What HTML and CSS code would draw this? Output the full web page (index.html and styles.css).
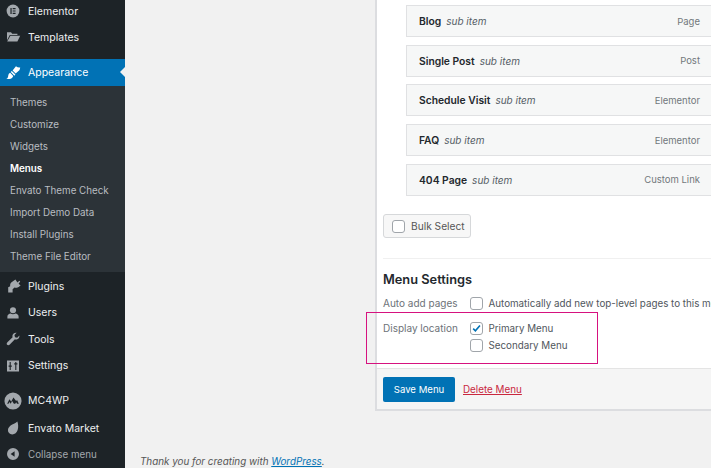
FILE: index.html
```html
<!DOCTYPE html>
<html lang="en">
<head>
<meta charset="utf-8">
<title>Menus</title>
<link rel="stylesheet" href="styles.css">
</head>
<body>
<div class="app">
  <nav class="side">
    <a class="row first"><svg class="ico" viewBox="0 0 20 20"><circle cx="10" cy="10" r="8"/><path class="cut" d="M6.800 6.200h1.500v7.600H6.800zM9.600 6.200h3.600v1.500H9.600zM9.600 9.250h3.600v1.500H9.600zM9.600 12.300h3.600v1.500H9.600z"/></svg>Elementor</a>
    <a class="row"><svg class="ico" viewBox="0 0 20 20"><path d="M2.500 4h5l1.500 1.800h6.500v1.700H6L2.500 14z"/><path d="M6.700 8.500H19l-3.500 7H2.700z"/></svg>Templates</a>
    <a class="row current"><svg class="ico" viewBox="0 0 20 20"><path d="M19 3c-2 .4-3.700-.3-5.300-1.500L9.500 6.800l3.800 3.800 4.700-4c.5-1.200.8-2.400 1-3.600z"/><path d="M8.500 7.500 13 12l-1.300 1.300-4.500-4.500zM6.500 9.800l3.800 3.800c-.5 1.800-2 3.300-5 3.900-1.200.2-2.800.2-3.800 0 2.200-1 2.300-2.700 2.500-4.200.3-1.600 1.200-3 2.500-3.500z"/></svg>Appearance</a>
    <div class="sub">
      <a>Themes</a>
      <a>Customize</a>
      <a>Widgets</a>
      <a class="on">Menus</a>
      <a>Envato Theme Check</a>
      <a>Import Demo Data</a>
      <a>Install Plugins</a>
      <a>Theme File Editor</a>
    </div>
    <a class="row r-plugins"><svg class="ico" viewBox="0 0 20 20"><path d="M13 2 15.500 5.500 18 3.500l1 1-2 2.700 2.500 2.300-1.300.8c-1.700 1.700-4 2.400-6.300 1.500L9.500 14v4H4v-6.500l2.500-1.200c-.4-2 .2-3.900 1.700-5.100L13 2z"/></svg>Plugins</a>
    <a class="row"><svg class="ico" viewBox="0 0 20 20"><circle cx="10" cy="6.500" r="3.800"/><path d="M3 17v-2.500c0-2.200 2-3.500 4-3.800 1.800 1 4.200 1 6 0 2 .3 4 1.600 4 3.800V17z"/></svg>Users</a>
    <a class="row"><svg class="ico" viewBox="0 0 20 20"><path d="M18 5.500c.3 2-.8 4-2.600 4.800-1 .4-2.100.4-3 .1L6 17c-1 1-2.500 1-3.300.2-.9-.9-.7-2.200.3-3.200l6.500-6.200c-.4-1-.4-2.200.1-3.200C10.500 2.800 12.500 1.800 14.500 2.200L11.800 5l.7 2.700 2.700.7z"/></svg>Tools</a>
    <a class="row"><svg class="ico" viewBox="0 0 20 20"><path fill-rule="evenodd" d="M2.500 3h15v14h-15zM5.800 5v4.500H4.500V11h1.300v4h1.400v-4h1.300V9.500H7.200V5zM12.800 5v1.500h-1.300V8h1.300v7h1.400V8h1.300V6.500h-1.300V5z"/></svg>Settings</a>
    <a class="row r-gap"><svg class="ico big" viewBox="0 0 20 20"><circle cx="10" cy="10" r="9.500"/><path class="cut" d="m3.500 13 2.500-5 2 2.500L10.500 6l3 4 1-1 2 4h-2l-1-1.500-1 1.500h-1.500l-2-3-1.500 3-1.500-2-1 2z"/></svg>MC4WP</a>
    <a class="row r-market"><svg class="ico" viewBox="0 0 20 20"><path d="M15.500 2c1 3.500 1.500 7 .3 10.500C14.800 15.800 12.300 18 9 18c-3.300 0-5.500-2.500-5.300-5.500.2-2.500 1.600-4 3.300-5.500C9.500 5 13 4.500 15.500 2z"/></svg>Envato Market</a>
    <a class="row collapse"><svg class="ico" viewBox="0 0 20 20"><path fill-rule="evenodd" d="M10 2.500a7.500 7.500 0 1 1 0 15 7.500 7.500 0 0 1 0-15zM12 6.500 7 10l5 3.500z"/></svg>Collapse menu</a>
  </nav>
  <main class="main">
    <div class="columns">
      <section class="panel">
        <div class="body">
          <ul class="items">
            <li><span><b>Blog</b><i>sub item</i></span><small>Page</small></li>
            <li><span><b>Single Post</b><i>sub item</i></span><small>Post</small></li>
            <li><span><b>Schedule Visit</b><i>sub item</i></span><small>Elementor</small></li>
            <li><span><b>FAQ</b><i>sub item</i></span><small>Elementor</small></li>
            <li><span><b>404 Page</b><i>sub item</i></span><small>Custom Link</small></li>
          </ul>
          <label class="bulk"><span class="check"></span>Bulk Select</label>
          <hr class="rule">
          <h3>Menu Settings</h3>
          <div class="setting auto">
            <span class="name">Auto add pages</span>
            <label class="opt"><span class="check"></span>Automatically add new top-level pages to this menu</label>
          </div>
          <div class="setting">
            <span class="name">Display location</span>
            <div class="opts">
              <label class="opt"><span class="check"><svg viewBox="0 0 14 14"><path d="M2.800 7.200 5.600 10 11.400 3.200" /></svg></span>Primary Menu</label>
              <label class="opt"><span class="check"></span>Secondary Menu</label>
            </div>
          </div>
        </div>
        <div class="foot">
          <button class="save" type="button">Save Menu</button>
          <a class="del">Delete Menu</a>
        </div>
      </section>
    </div>
    <p class="thanks">Thank you for creating with <a>WordPress</a>.</p>
    <div class="mark"></div>
  </main>
</div>
</body>
</html>
```

FILE: styles.css
```css
* { box-sizing: border-box; }
html, body { margin: 0; height: 468px; overflow: hidden; }
body { font-family: Inter, "Liberation Sans", sans-serif; font-size: 10px; color: #444; background: #f1f1f1; }
.app { display: flex; width: 711px; height: 468px; overflow: hidden; }
.side { flex: 0 0 125px; background: #1d2327; color: #eef0f1; font-size: 10.500px; }
.row { display: flex; align-items: center; height: 26.500px; padding-left: 5px; gap: 7px; position: relative; }
.row.first { height: 24px; padding-bottom: 2px; }
.ico { width: 16px; height: 16px; fill: #a3a8ad; flex: none; }
.ico.big { width: 18px; height: 18px; margin-left: -1px; margin-right: -1px; }
.ico .cut { fill: #1d2327; }
.current { background: #0172b5; color: #fff; margin-top: 8.500px; height: 27px; }
.current .ico { fill: #fff; }
.current::after { content: ""; position: absolute; right: 0; top: 8px; border: 5.500px solid transparent; border-right-color: #f1f1f1; border-left: 0; }
.sub { background: #2c3338; padding: 5px 0; height: 186px; color: #b9bdc1; font-size: 9.800px; }
.sub a { display: flex; align-items: center; height: 22px; padding-left: 10px; }
.sub .on { color: #fff; font-weight: 600; }
.r-plugins { margin-top: 1px; }
.r-gap { margin-top: 8.500px; }
.r-market { margin-top: 1px; }
.collapse { color: #a3a8ad; font-size: 9.800px; height: 25px; }
.main { flex: 1; min-width: 0; position: relative; }
.columns { display: flex; height: 411px; padding-left: 250px; }
.panel { flex: 0 0 400px; background: #fff; border: 1px solid #dcdde0; border-width: 0 0 2px 2px; display: flex; flex-direction: column; }
.body { flex: 1; padding: 5px 0 0 6px; }
.items { list-style: none; margin: 0; padding: 0 0 0 23px; }
.items li { display: flex; justify-content: space-between; align-items: center; width: 330px; height: 32px; margin-bottom: 7.700px; padding: 0 35px 0 12px; background: #f6f7f7; border: 1px solid #e0e1e3; white-space: nowrap; }
.items b { color: #23282d; font-weight: 600; font-size: 10.300px; }
.items i { margin-left: 5px; color: #555d66; font-size: 10px; }
.items small { color: #72777c; font-size: 9.500px; }
.bulk { display: flex; align-items: center; gap: 6px; width: 88px; height: 24px; margin-top: 18.500px; padding-left: 8px; background: #f7f7f7; border: 1px solid #d6d8da; border-radius: 3px; color: #555; font-size: 10.200px; }
.check { flex: none; width: 13px; height: 13px; background: #fff; border: 1px solid #a0a5aa; border-radius: 3px; display: block; }
.check svg { display: block; width: 11px; height: 11px; fill: none; stroke: #0172b5; stroke-width: 2; }
.rule { border: 0; border-top: 1px solid #f0f0f0; margin: 20px 0 13px; }
h3 { margin: 0 0 8px; font-size: 12.800px; line-height: 16px; font-weight: 600; color: #23282d; }
.setting { display: flex; white-space: nowrap; }
.setting.auto { margin-bottom: 10px; }
.name { width: 87px; color: #6d7278; line-height: 15px; }
.opts { display: flex; flex-direction: column; gap: 3px; }
.opt { display: flex; align-items: center; gap: 5.500px; height: 14px; color: #50565c; font-size: 9.800px; }
.foot { flex: 0 0 41px; display: flex; align-items: center; gap: 8px; padding: 0 0 0 6px; background: #f5f5f5; border-top: 1px solid #e4e4e4; }
.save { width: 72px; height: 25px; border: 0; border-radius: 2px; background: #0172b5; color: #fff; font: inherit; font-size: 9.600px; }
.del { color: #c9283e; text-decoration: underline; font-size: 9.850px; }
.thanks { margin: 44px 0 0 15px; font-style: italic; font-size: 9.860px; line-height: 13px; color: #555; }
.thanks a { color: #0172b5; text-decoration: underline; }
.mark { position: absolute; left: 241px; top: 312px; width: 232px; height: 52px; border: 1px solid #d6127f; }
```
